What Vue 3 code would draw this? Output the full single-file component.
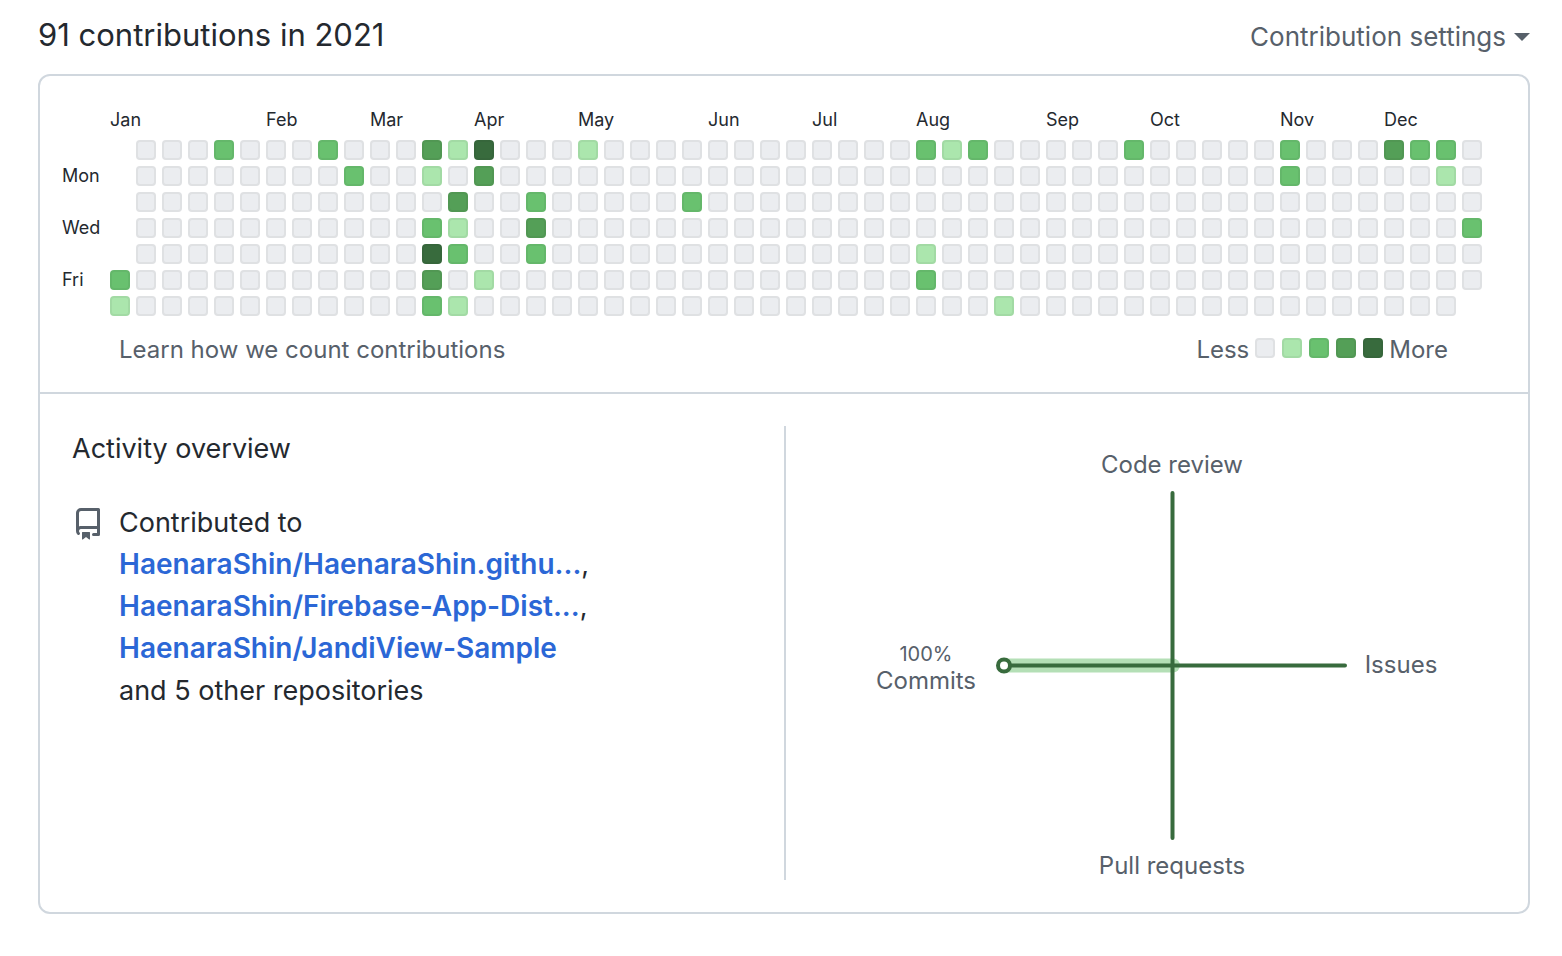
<script setup>
const months = [
  { name: 'Jan', weeks: 6 },
  { name: 'Feb', weeks: 4 },
  { name: 'Mar', weeks: 4 },
  { name: 'Apr', weeks: 4 },
  { name: 'May', weeks: 5 },
  { name: 'Jun', weeks: 4 },
  { name: 'Jul', weeks: 4 },
  { name: 'Aug', weeks: 5 },
  { name: 'Sep', weeks: 4 },
  { name: 'Oct', weeks: 5 },
  { name: 'Nov', weeks: 4 },
  { name: 'Dec', weeks: 4 },
]

// Each day lists its active weeks as { weekIndex: level }.
const days = [
  { label: '', first: 1, last: 52, active: { 4: 2, 8: 2, 12: 3, 13: 1, 14: 4, 18: 1, 31: 2, 32: 1, 33: 2, 39: 2, 45: 2, 49: 3, 50: 2, 51: 2 } },
  { label: 'Mon', first: 1, last: 52, active: { 9: 2, 12: 1, 14: 3, 45: 2, 51: 1 } },
  { label: '', first: 1, last: 52, active: { 13: 3, 16: 2, 22: 2 } },
  { label: 'Wed', first: 1, last: 52, active: { 12: 2, 13: 1, 16: 3, 52: 2 } },
  { label: '', first: 1, last: 52, active: { 12: 4, 13: 2, 16: 2, 31: 1 } },
  { label: 'Fri', first: 0, last: 52, active: { 0: 2, 12: 3, 14: 1, 31: 2 } },
  { label: '', first: 0, last: 51, active: { 0: 1, 12: 2, 13: 1, 34: 1 } },
]

const rows = days.map((day) => ({
  label: day.label,
  cells: Array.from({ length: 53 }, (_, week) =>
    week < day.first || week > day.last ? null : day.active[week] ?? 0
  ),
}))

const repositories = [
  { name: 'HaenaraShin/HaenaraShin.githu...', separator: ',' },
  { name: 'HaenaraShin/Firebase-App-Dist...', separator: ',' },
  { name: 'HaenaraShin/JandiView-Sample', separator: '' },
]
</script>

<template>
  <main class="page">
    <header class="header">
      <h2 class="title">91 contributions in 2021</h2>
      <button class="settings" type="button">
        Contribution settings
        <span class="caret"></span>
      </button>
    </header>

    <section class="card">
      <div class="calendar">
        <table class="graph">
          <thead>
            <tr>
              <td class="day"></td>
              <th v-for="month in months" :key="month.name" class="month" :colspan="month.weeks" scope="colgroup">
                {{ month.name }}
              </th>
            </tr>
          </thead>
          <tbody>
            <tr v-for="(row, index) in rows" :key="index">
              <th class="day" scope="row">{{ row.label }}</th>
              <td v-for="(level, week) in row.cells" :key="week" class="week">
                <span v-if="level !== null" class="cell" :class="`level-${level}`"></span>
              </td>
            </tr>
          </tbody>
        </table>
        <div class="calendar-footer">
          <a class="learn" href="#">Learn how we count contributions</a>
          <div class="legend">
            <span>Less</span>
            <span class="swatches">
              <span v-for="level in 5" :key="level" class="cell" :class="`level-${level - 1}`"></span>
            </span>
            <span>More</span>
          </div>
        </div>
      </div>

      <div class="activity">
        <div class="overview">
          <h3 class="overview-title">Activity overview</h3>
          <div class="contributed">
            <svg class="repo-icon" viewBox="0 0 16 16" aria-hidden="true">
              <path
                fill-rule="evenodd"
                d="M2 2.5A2.5 2.5 0 014.5 0h8.75a.75.75 0 01.75.75v12.5a.75.75 0 01-.75.75h-2.5a.75.75 0 110-1.5h1.75v-2h-8a1 1 0 00-.714 1.7.75.75 0 01-1.072 1.05A2.495 2.495 0 012 11.5v-9zm10.5-1V9h-8c-.356 0-.694.074-1 .208V2.5a1 1 0 011-1h8zM5 12.25v3.25a.25.25 0 00.4.2l1.45-1.087a.25.25 0 01.3 0L8.6 15.7a.25.25 0 00.4-.2v-3.25a.25.25 0 00-.25-.25h-3.5a.25.25 0 00-.25.25z"
              />
            </svg>
            <div class="contributed-text">
              <div>Contributed to</div>
              <div v-for="repo in repositories" :key="repo.name">
                <a class="repo" href="#">{{ repo.name }}</a>{{ repo.separator }}
              </div>
              <div>and 5 other repositories</div>
            </div>
          </div>
        </div>

        <div class="chart-pane">
          <svg class="chart" viewBox="0 0 710 454" role="img" aria-label="Commits 100%">
            <path class="area" d="M186 239.5H355" />
            <path class="axis" d="M354.5 67V412M186 239.5H527" />
            <circle class="point" cx="186" cy="239.5" r="6" />
            <text class="axis-label" x="354" y="47">Code review</text>
            <text class="axis-label" x="583" y="247">Issues</text>
            <text class="axis-label" x="354" y="448">Pull requests</text>
            <text class="axis-percent" x="108" y="235">100%</text>
            <text class="axis-label" x="108" y="263">Commits</text>
          </svg>
        </div>
      </div>
    </section>
  </main>
</template>

<style>
body {
  background: #fff;
}
</style>

<style scoped>
.page {
  box-sizing: border-box;
  padding: 14px 32px 42px 38px;
  font-family: Inter, "Liberation Sans", sans-serif;
  color: #24292f;
}

.header {
  display: flex;
  justify-content: space-between;
  align-items: flex-start;
  margin-bottom: 14px;
}

.title {
  margin: 0;
  font-size: 31px;
  font-weight: 400;
  line-height: 42px;
}

.settings {
  display: flex;
  align-items: center;
  gap: 8px;
  padding: 0;
  border: 0;
  background: none;
  font: inherit;
  font-size: 26px;
  line-height: 46px;
  color: #57606a;
  cursor: pointer;
}

.caret {
  border: 8px solid transparent;
  border-top-color: currentColor;
  border-bottom: 0;
}

.card {
  border: 2px solid #d0d7de;
  border-radius: 12px;
}

.calendar {
  padding: 24px 0 27px 16px;
  border-bottom: 2px solid #d0d7de;
}

.graph {
  border-spacing: 6px;
  font-size: 18px;
  line-height: 20px;
}

.graph th,
.graph td {
  padding: 0;
  font-weight: 400;
  text-align: left;
  white-space: nowrap;
}

.month {
  height: 28px;
  max-width: 0;
}

.day {
  width: 42px;
  min-width: 42px;
  max-width: 42px;
}

.week {
  width: 20px;
  height: 20px;
}

.cell {
  display: block;
  box-sizing: border-box;
  width: 20px;
  height: 20px;
  border: 2px solid rgba(27, 31, 35, 0.06);
  border-radius: 4px;
}

.level-0 {
  background: #ebedf0;
}

.level-1 {
  background: #abe6ad;
}

.level-2 {
  background: #69c16f;
}

.level-3 {
  background: #549f57;
}

.level-4 {
  background: #386b3d;
}

.calendar-footer {
  display: flex;
  justify-content: space-between;
  align-items: center;
  padding: 13px 80px 0 63px;
  font-size: 24px;
  line-height: 30px;
  color: #57606a;
}

.learn {
  color: inherit;
  text-decoration: none;
}

.legend {
  display: flex;
  align-items: center;
  gap: 6px;
}

.swatches {
  display: flex;
  gap: 7px;
  padding-bottom: 4px;
}

.activity {
  display: grid;
  grid-template-columns: 1fr 1fr;
  padding: 32px 0;
}

.overview {
  padding: 0 32px;
}

.overview-title {
  margin: 0 0 30px;
  font-size: 27px;
  font-weight: 400;
  line-height: 46px;
}

.contributed {
  display: flex;
  gap: 15px;
  font-size: 27px;
  line-height: 42px;
}

.repo-icon {
  flex: none;
  width: 32px;
  height: 32px;
  margin-top: 6px;
  fill: #57606a;
}

.repo {
  font-size: 28px;
  font-weight: 600;
  line-height: 1;
  color: #2b67d6;
  text-decoration: none;
}

.chart-pane {
  padding-left: 32px;
  border-left: 2px solid #d0d7de;
}

.chart {
  display: block;
  width: 100%;
}

.area {
  fill: none;
  stroke: #b4dfb6;
  stroke-width: 14px;
  stroke-linecap: round;
}

.axis {
  fill: none;
  stroke: #386b3d;
  stroke-width: 4px;
  stroke-linecap: round;
}

.point {
  fill: #fff;
  stroke: #386b3d;
  stroke-width: 4px;
}

.axis-label,
.axis-percent {
  font-size: 24px;
  text-anchor: middle;
  fill: #57606a;
}

.axis-percent {
  font-size: 20px;
}
</style>
